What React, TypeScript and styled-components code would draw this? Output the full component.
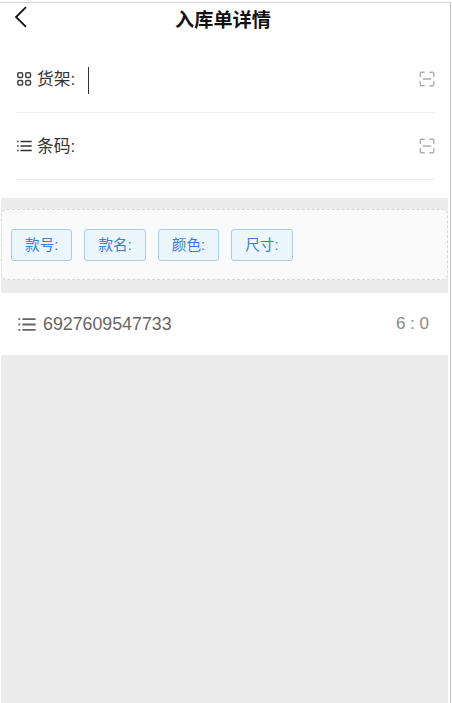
import React from "react";
import styled, { createGlobalStyle } from "styled-components";

const GlobalStyle = createGlobalStyle`
  * { box-sizing: border-box; }
  body {
    margin: 0;
    background: #fff;
    overflow: hidden;
    font-family: "Liberation Sans", "Noto Sans CJK SC", sans-serif;
  }
`;

const Frame = styled.div`
  width: 451px;
  height: 701px;
  margin-top: 2px;
  padding: 0 2px 0 1px;
  border-top: 1px solid #d4d4d4;
  border-right: 1px solid #c4c4c4;
`;

const Screen = styled.main`
  display: flex;
  flex-direction: column;
  height: 100%;
  background: #ececec;
`;

const Header = styled.header`
  display: grid;
  grid-template-columns: 40px 1fr 40px;
  align-items: center;
  height: 43px;
  padding-bottom: 7px;
  background: #fff;
`;

const BackButton = styled.button`
  display: flex;
  padding: 0 0 8px 13px;
  border: 0;
  background: none;
`;

const Title = styled.h1`
  margin: 0;
  padding-right: 3px;
  text-align: center;
  font-size: 19.2px;
  line-height: 28px;
  font-weight: 700;
  color: #111;
`;

const Form = styled.section`
  height: 152px;
  padding: 0 13px 0 15px;
  background: #fff;
`;

const Field = styled.div`
  display: flex;
  align-items: center;
  height: 67px;
  border-bottom: 1px solid #eee;
  color: #333;
`;

const FieldLabel = styled.span`
  width: 51px;
  margin-left: 5px;
  padding-top: 2px;
  font-size: 16.8px;
  line-height: 24px;
  white-space: nowrap;
`;

const Caret = styled.span`
  width: 1px;
  height: 27px;
  margin-top: 2px;
  background: #333;
`;

const ScanButton = styled.button`
  display: flex;
  margin-left: auto;
  padding: 0;
  border: 0;
  background: none;
`;

const TagPanel = styled.section`
  display: flex;
  align-items: center;
  gap: 12px;
  height: 71px;
  margin: 11px 0 13px;
  padding: 0 9px;
  border: 1px dashed #d8d8d8;
  border-radius: 6px;
  background: #fafafa;
`;

const Tag = styled.span`
  display: flex;
  align-items: center;
  justify-content: center;
  width: 61.4px;
  height: 32px;
  border: 1px solid #a9cdec;
  border-radius: 3px;
  background: #ebf6ff;
  color: #3d7bd6;
  font-size: 14.6px;
  line-height: 22px;
`;

const Item = styled.section`
  display: flex;
  align-items: center;
  height: 62px;
  padding: 0 19px 0 16px;
  background: #fff;
  color: #666;
`;

const Barcode = styled.span`
  margin-left: 7px;
  font-size: 17.8px;
`;

const Count = styled.span`
  margin-left: auto;
  font-size: 17px;
  color: #8a8a8a;
`;

const BackIcon = () => (
  <svg width="14" height="22" viewBox="0 0 14 22" fill="none" stroke="#111" strokeWidth="1.8">
    <path d="M12 1.2 2 11l10 9.8" />
  </svg>
);

const GridIcon = () => (
  <svg width="16" height="16" viewBox="0 0 16 16" fill="none" stroke="#444" strokeWidth="1.5">
    <rect x="1.8" y="1.8" width="4.8" height="4.6" rx="1.2" />
    <rect x="9.7" y="1.8" width="4.8" height="4.6" rx="1.2" />
    <rect x="1.8" y="9.4" width="4.8" height="4.6" rx="1.2" />
    <rect x="9.7" y="9.4" width="4.8" height="4.6" rx="1.2" />
  </svg>
);

const ListIcon = ({ width = 16, color = "#333" }: { width?: number; color?: string }) => (
  <svg width={width} height={width} viewBox="0 0 16 16" fill="none" stroke={color} strokeWidth="1.6">
    <path d="M1.2 3.5h1.5M1.2 8h1.5M1.2 12.5h1.5M4.5 3.5h11.2M4.5 8h11.2M4.5 12.5h11.2" />
  </svg>
);

const ScanIcon = () => (
  <svg width="16" height="16" viewBox="0 0 16 16" fill="none" stroke="#b0b0b0" strokeWidth="1.4">
    <path d="M1.2 6V2.2q0-1 1-1H5.7M10.3 1.2h3.5q1 0 1 1V6M14.8 10v3.8q0 1-1 1h-3.5M5.7 14.8H2.2q-1 0-1-1V10M3.8 8h8.4" />
  </svg>
);

const tags = ["款号:", "款名:", "颜色:", "尺寸:"];

export default function App() {
  return (
    <>
      <GlobalStyle />
      <Frame>
        <Screen>
          <Header>
            <BackButton aria-label="返回"><BackIcon /></BackButton>
            <Title>入库单详情</Title>
          </Header>
          <Form>
            <Field>
              <GridIcon />
              <FieldLabel>货架:</FieldLabel>
              <Caret />
              <ScanButton aria-label="扫描货架"><ScanIcon /></ScanButton>
            </Field>
            <Field>
              <ListIcon />
              <FieldLabel>条码:</FieldLabel>
              <ScanButton aria-label="扫描条码"><ScanIcon /></ScanButton>
            </Field>
          </Form>
          <TagPanel>
            {tags.map((tag) => <Tag key={tag}>{tag}</Tag>)}
          </TagPanel>
          <Item>
            <ListIcon width={19} color="#666" />
            <Barcode>6927609547733</Barcode>
            <Count>6 : 0</Count>
          </Item>
        </Screen>
      </Frame>
    </>
  );
}
